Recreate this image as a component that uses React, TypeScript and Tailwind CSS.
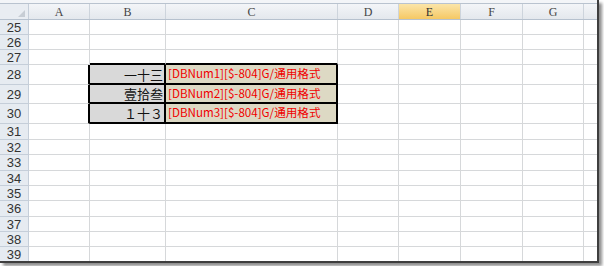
const cols = [
  { key: 'A', w: 'w-[61px]' },
  { key: 'B', w: 'w-[76px]' },
  { key: 'C', w: 'w-[172px]' },
  { key: 'D', w: 'w-[61px]' },
  { key: 'E', w: 'w-[62px]' },
  { key: 'F', w: 'w-[62px]' },
  { key: 'G', w: 'w-[61px]' },
  { key: 'H', w: 'w-[40px]' },
];

const rows = [
  { n: 25, h: 'h-[15px]' },
  { n: 26, h: 'h-[15px]' },
  { n: 27, h: 'h-[15px]' },
  { n: 28, h: 'h-[20px]', b: '一十三', c: '[DBNum1][$-804]G/通用格式' },
  { n: 29, h: 'h-[19px]', b: '壹拾叁', c: '[DBNum2][$-804]G/通用格式' },
  { n: 30, h: 'h-[20px]', b: '１十３', c: '[DBNum3][$-804]G/通用格式' },
  { n: 31, h: 'h-[16px]' },
  { n: 32, h: 'h-[15px]' },
  { n: 33, h: 'h-[16px]' },
  { n: 34, h: 'h-[15px]' },
  { n: 35, h: 'h-[15px]' },
  { n: 36, h: 'h-[16px]' },
  { n: 37, h: 'h-[15px]' },
  { n: 38, h: 'h-[15px]' },
  { n: 39, h: 'h-[16px]' },
];

const cjk = { fontFamily: '"Noto Sans CJK SC", "Liberation Sans", sans-serif' };

function Cell({ row, col }: { row: (typeof rows)[number]; col: (typeof cols)[number] }) {
  const inBox = row.b !== undefined;
  if (inBox && col.key === 'B') {
    return (
      <div
        className={`${col.w} shrink-0 flex items-center justify-end pr-[1px] bg-[#d9d9d9] border-r-2 border-b-2 border-black text-[13px] leading-none text-[#111]`}
        style={cjk}
      >
        {row.b}
      </div>
    );
  }
  if (inBox && col.key === 'C') {
    return (
      <div
        className={`${col.w} shrink-0 flex items-center pl-[2px] bg-[#ddd9c4] border-r-2 border-b-2 border-black text-[11.6px] leading-none text-[#f00000] whitespace-nowrap`}
        style={cjk}
      >
        {row.c}
      </div>
    );
  }
  let cls = 'border-r border-b border-[#d6d8da]';
  if (inBox && col.key === 'A') cls = 'border-r-2 border-r-black border-b border-b-[#d6d8da]';
  if (row.n === 27 && (col.key === 'B' || col.key === 'C')) cls = 'border-r border-r-[#d6d8da] border-b-2 border-b-black';
  return <div className={`${col.w} shrink-0 bg-white ${cls}`} />;
}

export default function App() {
  return (
    <div className="relative w-[604px] h-[266px] overflow-hidden bg-white">
      <div className="w-[599px] h-[263px] flex flex-col overflow-hidden border-r-2 border-b-2 border-[#3e3e3e] shadow-[3px_3px_3px_rgba(0,0,0,0.45)] bg-white">
        <div className="h-[4px] shrink-0 border-b border-[#b9c3cf] bg-[#f3f5f8]" />
        <div className="flex h-[16px] shrink-0 border-b border-[#b6c1ce]">
          <div className="relative w-[29px] shrink-0 border-r border-[#c5ced9] bg-[#e9edf2]">
            <div className="absolute right-[3px] bottom-[2px] w-0 h-0 border-l-[7px] border-l-transparent border-b-[7px] border-b-[#c7cdd4]" />
          </div>
          {cols.map((c) => (
            <div
              key={c.key}
              className={`${c.w} shrink-0 flex items-center justify-center border-r border-[#cdd4dc] text-[12px] leading-none ${
                c.key === 'E'
                  ? 'bg-gradient-to-b from-[#fbe5a8] to-[#f5c863] text-[#333]'
                  : 'bg-gradient-to-b from-[#f3f5f8] to-[#e4e8ed] text-[#444]'
              }`}
              style={{ fontFamily: '"Liberation Serif", serif' }}
            >
              {c.key === 'H' ? '' : c.key}
            </div>
          ))}
        </div>
        {rows.map((r) => (
          <div key={r.n} className={`flex shrink-0 ${r.h}`}>
            <div
              className="w-[29px] shrink-0 flex items-center justify-center bg-[#e6ebf1] border-r border-b border-[#c5ced9] text-[13px] leading-none text-[#333]"
              style={{ fontFamily: '"Liberation Sans", sans-serif' }}
            >
              {r.n}
            </div>
            {cols.map((c) => (
              <Cell key={c.key} row={r} col={c} />
            ))}
          </div>
        ))}
      </div>
    </div>
  );
}
